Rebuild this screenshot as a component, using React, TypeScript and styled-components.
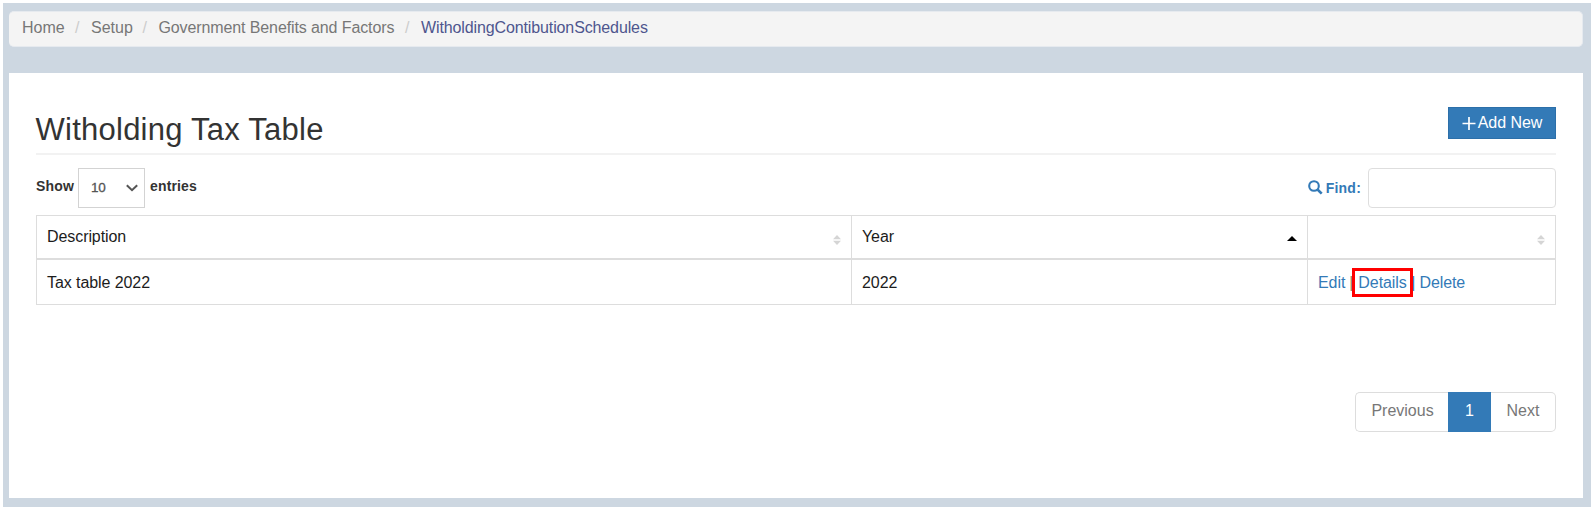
import React from "react";
import styled, { createGlobalStyle } from "styled-components";

const GlobalStyle = createGlobalStyle`
  * { box-sizing: border-box; }
  html, body { margin: 0; background: #fff; }
  body { font-family: "Liberation Sans", Arial, sans-serif; font-size: 16px; color: #1c1c1c; overflow: hidden; }
  a { text-decoration: none; color: inherit; }
`;

const Page = styled.div`
  width: 1588px;
  height: 504px;
  margin: 3px 1px 1px 3px;
  padding: 8px 8px 9px 6px;
  background: #cdd7e1;
  display: flex;
  flex-direction: column;
  gap: 26px;
`;

const Breadcrumb = styled.nav`
  height: 36px;
  flex: none;
  padding: 0 13px 2px;
  display: flex;
  align-items: center;
  background: #f4f4f4;
  border: 1px solid #e6eaef;
  border-left: 0;
  border-radius: 5px;
  color: #777;
`;

const Crumb = styled.a<{ $width: number; $active?: boolean; $spacing?: number }>`
  width: ${(p) => p.$width}px;
  white-space: nowrap;
  letter-spacing: ${(p) => p.$spacing ?? 0}px;
  color: ${(p) => (p.$active ? "#4e568e" : "#777")};
`;

const Slash = styled.span`
  width: 16px;
  color: #ccc;
`;

const Panel = styled.main`
  flex: 1;
  background: #fff;
  padding: 33px 27px 0;
  display: flex;
  flex-direction: column;
`;

const Header = styled.header`
  height: 49px;
  flex: none;
  display: flex;
  justify-content: space-between;
  align-items: flex-start;
  border-bottom: 2px solid #f2f2f2;
`;

const Title = styled.h1`
  margin: 6px 0 0 -0.5px;
  font-size: 31px;
  line-height: 36px;
  font-weight: 400;
  letter-spacing: 0.25px;
  color: #333;
`;

const AddButton = styled.button`
  width: 108px;
  height: 32px;
  margin-top: 1px;
  padding: 0 0 1px;
  display: flex;
  align-items: center;
  justify-content: center;
  gap: 2px;
  font: 16px "Liberation Sans", Arial, sans-serif;
  letter-spacing: -0.05px;
  color: #fff;
  background: #337ab7;
  border: 1px solid #2c6fa9;
`;

const Controls = styled.div`
  height: 60px;
  flex: none;
  padding-top: 13px;
  display: flex;
  justify-content: space-between;
  align-items: flex-start;
  font-size: 14px;
  font-weight: 700;
`;

const LengthControl = styled.label`
  display: flex;
  align-items: flex-start;
  line-height: 37px;
  letter-spacing: 0.15px;
  color: #333;
`;

const SelectBox = styled.span`
  width: 67px;
  height: 40px;
  margin: 0 5px 0 4px;
  padding: 0 6px 1px 12px;
  display: flex;
  align-items: center;
  justify-content: space-between;
  border: 1px solid #d3d3d3;
  font-size: 13.5px;
  letter-spacing: -0.2px;
  font-weight: 400;
  color: #555;
  -webkit-text-stroke: 0.3px #555;
`;

const ShowText = styled.span`
  width: 38px;
`;

const FindControl = styled.label`
  display: flex;
  align-items: flex-start;
  line-height: 40px;
  letter-spacing: 0.2px;
  color: #337ab7;
  svg { margin: 12px 3px 0 0; }
`;

const SearchInput = styled.input`
  width: 188px;
  height: 40px;
  margin-left: 7px;
  border: 1px solid #dedede;
  border-radius: 4px;
  outline: 0;
`;

const Table = styled.table`
  width: 1520px;
  table-layout: fixed;
  border-collapse: separate;
  border-spacing: 0;
  border-top: 1px solid #ddd;
  border-left: 1px solid #ddd;
  letter-spacing: -0.08px;
`;

const HeadCell = styled.th<{ $width: number }>`
  width: ${(p) => p.$width}px;
  height: 44px;
  padding: 0 10px 1px;
  font-weight: 400;
  text-align: left;
  border-right: 1px solid #ddd;
  border-bottom: 2px solid #ddd;
`;

const HeadContent = styled.div`
  display: flex;
  align-items: center;
  justify-content: space-between;
  line-height: 18px;
  height: 18px;
`;

const Cell = styled.td`
  height: 45px;
  padding: 2px 10px 0;
  border-right: 1px solid #ddd;
  border-bottom: 1px solid #ddd;
`;

const Actions = styled.div`
  height: 29px;
  margin-top: -1px;
  display: flex;
  align-items: flex-start;
  line-height: 29px;
  color: #337ab7;
`;

const ActionLink = styled.a<{ $marked?: boolean }>`
  position: relative;
  z-index: 1;
  ${(p) =>
    p.$marked &&
    `
    width: 61px;
    height: 29px;
    margin: 0 0 0 -2px;
    padding-left: 3px;
    line-height: 23px;
    border: 3px solid #f00;
  `}
`;

const Divider = styled.span<{ $left: number; $right: number }>`
  margin: 0 ${(p) => p.$right}px 0 ${(p) => p.$left}px;
  color: ${(p) => (p.$left < 0 ? "#337ab7" : "#8d7a5a")};
`;

const Pagination = styled.nav`
  height: 40px;
  margin: 87px 0 0;
  align-self: flex-end;
  display: flex;
`;

const PageLink = styled.a<{ $width: number; $active?: boolean }>`
  width: ${(p) => p.$width}px;
  line-height: 36px;
  text-align: center;
  color: ${(p) => (p.$active ? "#fff" : "#777")};
  background: ${(p) => (p.$active ? "#337ab7" : "#fff")};
  border: 1px solid ${(p) => (p.$active ? "#337ab7" : "#ddd")};
  &:first-child { padding-left: 1px; border-right: 0; border-radius: 5px 0 0 5px; }
  &:last-child { border-left: 0; border-radius: 0 5px 5px 0; }
`;

const SortIcon = styled.svg<{ $top: number }>`
  flex: none;
  margin: ${(p) => p.$top}px 0 0 0;
`;

const Sortable = () => (
  <SortIcon $top={6} width="8" height="10" viewBox="0 0 8 10" fill="#d5d5d5">
    <path d="M4 0 8 4.2H0Z M0 5.8H8L4 10Z" />
  </SortIcon>
);

export default function App() {
  return (
    <>
      <GlobalStyle />
      <Page>
        <Breadcrumb>
          <Crumb href="#" $width={53}>Home</Crumb>
          <Slash>/</Slash>
          <Crumb href="#" $width={51.5}>Setup</Crumb>
          <Slash>/</Slash>
          <Crumb href="#" $width={246.5} $spacing={-0.11}>Government Benefits and Factors</Crumb>
          <Slash>/</Slash>
          <Crumb href="#" $width={240} $spacing={-0.12} $active>WitholdingContibutionSchedules</Crumb>
        </Breadcrumb>
        <Panel>
          <Header>
            <Title>Witholding Tax Table</Title>
            <AddButton>
              <svg width="14" height="14" viewBox="0 0 14 14" stroke="#fff" strokeWidth="1.7">
                <path d="M7 1V14M.5 7.5H13.5" />
              </svg>
              Add New
            </AddButton>
          </Header>
          <Controls>
            <LengthControl>
              <ShowText>Show</ShowText>
              <SelectBox>
                10
                <svg width="12" height="8" viewBox="0 0 12 8" fill="none" stroke="#555" strokeWidth="2">
                  <path d="M.8 1.2 6 6.2 11.2 1.2" />
                </svg>
              </SelectBox>
              entries
            </LengthControl>
            <FindControl>
              <svg width="15" height="15" viewBox="0 0 15 15" fill="none" stroke="#337ab7">
                <circle cx="6" cy="6" r="4.8" strokeWidth="2.1" />
                <path d="m9.5 9.5 4.2 4.2" strokeWidth="2.6" />
              </svg>
              Find:
              <SearchInput />
            </FindControl>
          </Controls>
          <Table>
            <thead>
              <tr>
                <HeadCell $width={815}><HeadContent>Description<Sortable /></HeadContent></HeadCell>
                <HeadCell $width={456}>
                  <HeadContent>
                    Year
                    <SortIcon $top={4} width="10" height="5" viewBox="0 0 10 5">
                      <path d="M5 0 10 5H0Z" />
                    </SortIcon>
                  </HeadContent>
                </HeadCell>
                <HeadCell $width={248}><HeadContent><span /><Sortable /></HeadContent></HeadCell>
              </tr>
            </thead>
            <tbody>
              <tr>
                <Cell>Tax table 2022</Cell>
                <Cell>2022</Cell>
                <Cell>
                  <Actions>
                    <ActionLink href="#">Edit</ActionLink>
                    <Divider $left={4} $right={1}>|</Divider>
                    <ActionLink href="#" $marked>Details</ActionLink>
                    <Divider $left={-2} $right={4}>|</Divider>
                    <ActionLink href="#">Delete</ActionLink>
                  </Actions>
                </Cell>
              </tr>
            </tbody>
          </Table>
          <Pagination>
            <PageLink href="#" $width={93}>Previous</PageLink>
            <PageLink href="#" $width={43} $active>1</PageLink>
            <PageLink href="#" $width={65}>Next</PageLink>
          </Pagination>
        </Panel>
      </Page>
    </>
  );
}
